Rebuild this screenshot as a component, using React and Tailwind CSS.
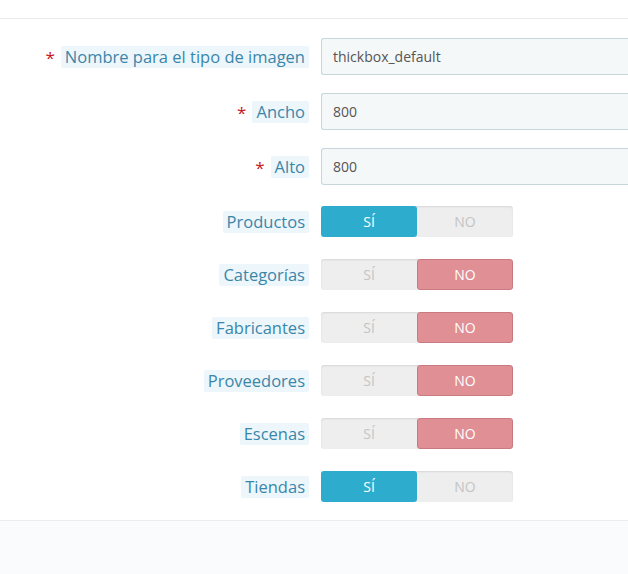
export default function App() {
  const font = { fontFamily: '"Open Sans", "Noto Sans", sans-serif' };
  const inputs = [
    { label: "Nombre para el tipo de imagen", value: "thickbox_default" },
    { label: "Ancho", value: "800" },
    { label: "Alto", value: "800" },
  ];
  const toggles = [
    { label: "Productos", on: true },
    { label: "Categorías", on: false },
    { label: "Fabricantes", on: false },
    { label: "Proveedores", on: false },
    { label: "Escenas", on: false },
    { label: "Tiendas", on: true },
  ];
  const Label = ({ text, req }) => (
    <div className="w-[309px] flex justify-end items-center gap-[6px] pr-0">
      {req && <span className="text-[#c8161d] text-[17px] leading-none mt-[2px]">*</span>}
      <span className="bg-[#edf6fa] text-[#3a86aa] text-[16.5px] leading-[22px] px-[4px] rounded-[2px]">{text}</span>
    </div>
  );
  return (
    <div className="w-[628px] h-[574px] bg-[#fafbfc] overflow-hidden" style={font}>
      <div className="bg-white border-b border-[#eaedef]">
        <div className="h-[19px] border-b border-[#eaedef]" />
        <div className="flex flex-col pt-[19px] pb-[18px]">
          <div className="flex flex-col gap-[18px]">
            {inputs.map((r) => (
              <div key={r.label} className="flex items-center h-[37px]">
                <Label text={r.label} req />
                <div className="ml-[12px] flex-1 h-[37px] bg-[#f5f8f9] border border-r-0 border-[#c7d6db] rounded-l-[3px] flex items-center pl-[11px] text-[14px] text-[#555]">
                  {r.value}
                </div>
              </div>
            ))}
          </div>
          <div className="flex flex-col gap-[22px] mt-[21px]">
            {toggles.map((t) => (
              <div key={t.label} className="flex items-center h-[31px]">
                <Label text={t.label} />
                <div className="ml-[12px] w-[192px] h-[31px] flex rounded-[3px] bg-[#eeeeee] shadow-[inset_0_1px_2px_rgba(0,0,0,0.1)] text-[14px]">
                  <div
                    className={
                      t.on
                        ? "w-[96px] flex items-center justify-center rounded-[3px] bg-[#2eacce] text-white"
                        : "w-[96px] flex items-center justify-center text-[#c4c4c4]"
                    }
                  >
                    SÍ
                  </div>
                  <div
                    className={
                      t.on
                        ? "w-[96px] flex items-center justify-center text-[#c4c4c4]"
                        : "w-[96px] flex items-center justify-center rounded-[3px] bg-[#e08f95] border border-[#c97a80] text-white"
                    }
                  >
                    NO
                  </div>
                </div>
              </div>
            ))}
          </div>
        </div>
      </div>
    </div>
  );
}
